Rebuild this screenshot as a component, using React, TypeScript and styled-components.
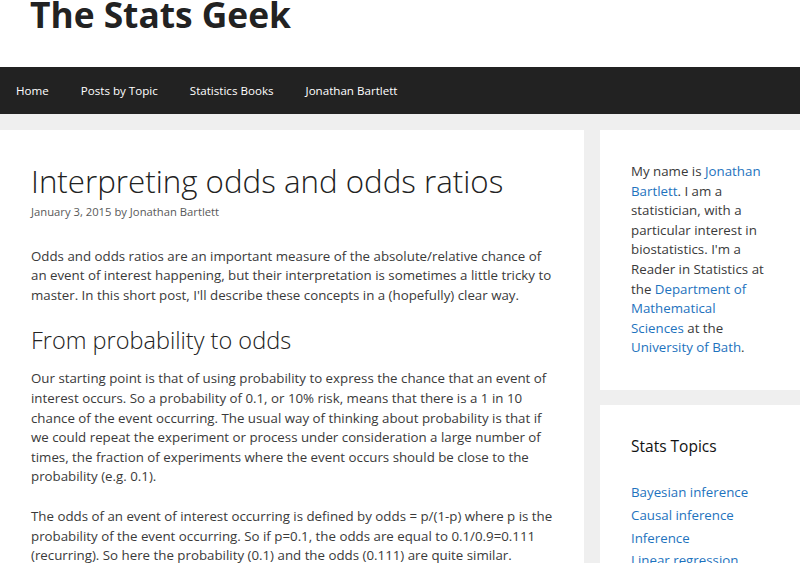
import React from "react";
import styled, { createGlobalStyle } from "styled-components";

const Global = createGlobalStyle`
  html, body { margin: 0; padding: 0; }
  body {
    background: #efefef;
    font-family: "Open Sans", "Noto Sans", "Liberation Sans", sans-serif;
    color: #3a3a3a;
    -webkit-font-smoothing: antialiased;
  }
  a { color: #1e73be; text-decoration: none; }
`;

const Header = styled.header`
  background: #fff;
  height: 67px;
  overflow: hidden;
  padding: 0 30px;
`;

const SiteTitle = styled.div`
  margin-top: -4px;
  font-size: 35.3px;
  line-height: 36px;
  font-weight: 700;
  color: #222;
`;

const Nav = styled.nav`
  background: #222;
  height: 47px;
  display: flex;
`;

const NavItem = styled.a`
  color: #fff;
  font-size: 11.6px;
  line-height: 47px;
  padding: 0 16px;
`;

const Container = styled.div`
  display: grid;
  grid-template-columns: 584px 200px;
  column-gap: 16px;
  padding-top: 16px;
  align-items: start;
`;

const Article = styled.article`
  background: #fff;
  padding: 32px 31px;
  min-height: 500px;
`;

const Title = styled.h1`
  margin: 0;
  font-size: 31.3px;
  line-height: 38.4px;
  font-weight: 300;
  color: #222;
`;

const Meta = styled.div`
  margin-top: 3px;
  font-size: 11.25px;
  line-height: 17.4px;
  color: #595959;
  a { color: #595959; }
`;

const Content = styled.div`
  margin-top: 26px;
`;

const P = styled.p`
  margin: 0 0 20px;
  font-size: 13.3px;
  line-height: 19.6px;
`;

const H2 = styled.h2`
  margin: 0 0 15px;
  font-size: 23.5px;
  line-height: 28.8px;
  font-weight: 300;
  color: #222;
`;

const Sidebar = styled.aside`
  display: flex;
  flex-direction: column;
  gap: 15px;
`;

const Widget = styled.section`
  background: #fff;
  padding: 32px 31px;
  font-size: 13.3px;
  line-height: 19.6px;
`;

const WidgetTitle = styled.h3`
  margin: 0 0 27px;
  font-size: 15.5px;
  line-height: 18.6px;
  font-weight: 400;
  color: #111;
`;

const List = styled.ul`
  list-style: none;
  margin: 0;
  padding: 0;
`;

const Li = styled.li`
  margin-bottom: 3.4px;
`;

export default function App() {
  return (
    <>
      <Global />
      <Header>
        <SiteTitle>The Stats Geek</SiteTitle>
      </Header>
      <Nav>
        <NavItem href="#">Home</NavItem>
        <NavItem href="#">Posts by Topic</NavItem>
        <NavItem href="#">Statistics Books</NavItem>
        <NavItem href="#">Jonathan Bartlett</NavItem>
      </Nav>
      <Container>
        <Article>
          <Title>Interpreting odds and odds ratios</Title>
          <Meta>
            January 3, 2015 by <a href="#">Jonathan Bartlett</a>
          </Meta>
          <Content>
            <P>
              Odds and odds ratios are an important measure of the absolute/relative chance of an
              event of interest happening, but their interpretation is sometimes a little tricky to
              master. In this short post, I'll describe these concepts in a (hopefully) clear way.
            </P>
            <H2>From probability to odds</H2>
            <P>
              Our starting point is that of using probability to express the chance that an event of
              interest occurs. So a probability of 0.1, or 10% risk, means that there is a 1 in 10
              chance of the event occurring. The usual way of thinking about probability is that if
              we could repeat the experiment or process under consideration a large number of
              times, the fraction of experiments where the event occurs should be close to the
              probability (e.g. 0.1).
            </P>
            <P>
              The odds of an event of interest occurring is defined by odds = p/(1-p) where p is the
              probability of the event occurring. So if p=0.1, the odds are equal to 0.1/0.9=0.111
              (recurring). So here the probability (0.1) and the odds (0.111) are quite similar.
            </P>
          </Content>
        </Article>
        <Sidebar>
          <Widget>
            My name is <a href="#">Jonathan Bartlett</a>. I am a statistician, with a particular
            interest in biostatistics. I'm a Reader in Statistics at the{" "}
            <a href="#">Department of Mathematical Sciences</a> at the{" "}
            <a href="#">University of Bath</a>.
          </Widget>
          <Widget>
            <WidgetTitle>Stats Topics</WidgetTitle>
            <List>
              <Li><a href="#">Bayesian inference</a></Li>
              <Li><a href="#">Causal inference</a></Li>
              <Li><a href="#">Inference</a></Li>
              <Li><a href="#">Linear regression</a></Li>
              <Li><a href="#">Logistic regression</a></Li>
            </List>
          </Widget>
        </Sidebar>
      </Container>
    </>
  );
}
